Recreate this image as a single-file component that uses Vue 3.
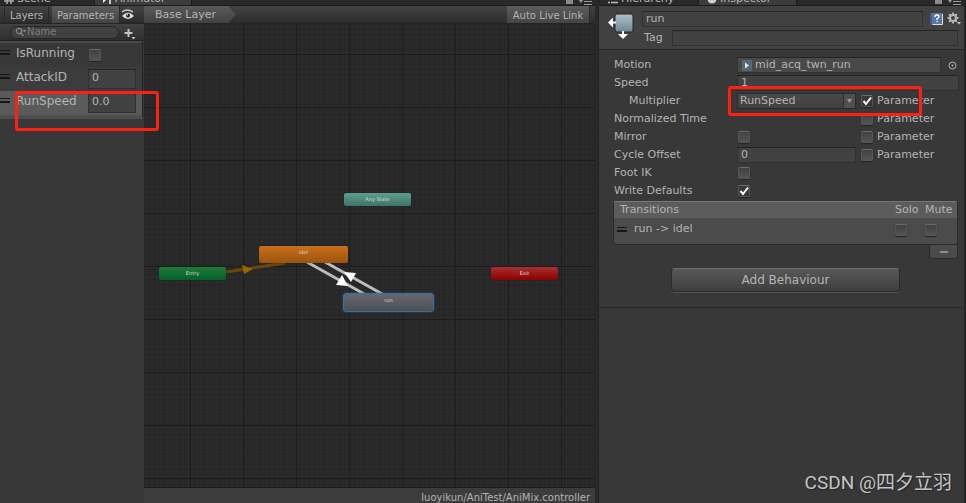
<script setup>
import { reactive, ref } from 'vue'

const search = ref('')
const isRunning = ref(false)
const attackId = ref('0')
const runSpeed = ref('0.0')

const nodes = [
  { id: 'any', label: 'Any State', x: 200, y: 169, w: 67 },
  { id: 'idel', label: 'idel', x: 115, y: 222, w: 89 },
  { id: 'entry', label: 'Entry', x: 15, y: 243, w: 67 },
  { id: 'exit', label: 'Exit', x: 347, y: 243, w: 67 },
  { id: 'run', label: 'run', x: 199, y: 269, w: 91 }
]

const state = reactive({
  name: 'run',
  tag: '',
  motion: 'mid_acq_twn_run',
  speed: '1',
  multiplier: 'RunSpeed',
  multiplierParam: true,
  timeParam: false,
  mirror: false,
  mirrorParam: false,
  cycleOffset: '0',
  cycleParam: false,
  footIk: false,
  writeDefaults: true,
  solo: false,
  mute: false
})
</script>

<template>
  <main class="editor">
    <section class="animator">
      <nav class="tabs">
        <a href="#scene" class="tab tab-scene">
          <svg class="tab-icon" viewBox="0 0 10 10"><path d="M3 0v10M7 0v10M0 3h10M0 7h10" stroke="#aaa" stroke-width="1.5" /></svg>Scene
        </a>
        <a href="#animator" class="tab tab-animator active">
          <svg class="tab-icon" viewBox="0 0 10 10"><path d="M1 0v9l3-3h3z" fill="#eee" /><path d="M8 5v5" stroke="#ccc" stroke-width="2" /></svg>Animator
        </a>
        <span class="window-tools"><i class="lock"></i><svg width="13" height="5" viewBox="0 0 13 5"><path d="M0 0h4L2 3zM5 1h8v1H5zM5 4h8v1H5z" fill="#9c9c9c" /></svg></span>
      </nav>

      <div class="animator-body">
        <aside class="params">
          <div class="bar">
            <button class="bar-btn layers">Layers</button>
            <button class="bar-btn parameters on">Parameters</button>
            <button class="eye" aria-label="Toggle panel">
              <svg width="14" height="12" viewBox="0 0 14 12">
                <path d="M1 3Q6 -1 12 3" fill="none" stroke="#ccc" stroke-width="1.3" />
                <path d="M1 7Q7 0 13 7Q7 13 1 7z" fill="#ddd" />
                <circle cx="7" cy="6.500" r="2" fill="#222" /><circle cx="6.300" cy="5.800" r=".8" fill="#eee" />
              </svg>
            </button>
          </div>
          <div class="search-row">
            <label class="search">
              <svg width="12" height="10" viewBox="0 0 12 10">
                <circle cx="4" cy="4" r="2.600" fill="none" stroke="#888" stroke-width="1.200" /><path d="M6 6l2.500 3" stroke="#888" stroke-width="1.300" /><path d="M7.500 3h4l-2 2.500z" fill="#888" />
              </svg>
              <input v-model="search" placeholder="Name" aria-label="Search parameters">
            </label>
            <button class="add" aria-label="Add parameter">
              <svg width="12" height="12" viewBox="0 0 12 12"><path d="M4.500 1v8M0.500 5h8" stroke="#c4c4c4" stroke-width="2" /><path d="M7.500 9h4l-2 2.500z" fill="#c4c4c4" /></svg>
            </button>
          </div>
          <div class="param-list">
            <div class="param">
              <i class="grip"></i><label for="p-running">IsRunning</label>
              <input id="p-running" v-model="isRunning" type="checkbox" class="check">
            </div>
            <div class="param alt">
              <i class="grip"></i><label for="p-attack">AttackID</label>
              <input id="p-attack" v-model="attackId" class="field">
            </div>
            <div class="param selected">
              <i class="grip"></i><label for="p-speed">RunSpeed</label>
              <input id="p-speed" v-model="runSpeed" class="field">
            </div>
          </div>
          <div class="mark mark-param"></div>
        </aside>

        <div class="graph">
          <div class="bar graph-bar">
            <a href="#base" class="crumb">Base Layer</a>
            <button class="bar-btn on live">Auto Live Link</button>
          </div>
          <div class="canvas">
            <svg class="edges" width="452" height="464" viewBox="0 0 452 464">
              <path d="M82 248L141 239" stroke="#694803" stroke-width="3" />
              <path d="M98 241l11 4-9 5z" fill="#9a6500" />
              <path d="M163 238L222 271M181 238L240 271" stroke="#bcbcbc" stroke-width="3" />
              <path d="M198 251l-6 10 12 1zM200 248l12 1-5 9z" fill="#fff" />
            </svg>
            <div
              v-for="n in nodes" :key="n.id" class="node" :class="n.id"
              :style="{ left: n.x + 'px', top: n.y + 'px', width: n.w + 'px' }"
            >{{ n.label }}</div>
          </div>
          <footer class="path">luoyikun/AniTest/AniMix.controller</footer>
        </div>
      </div>
    </section>

    <section class="inspector">
      <nav class="tabs">
        <a href="#hierarchy" class="tab tab-hierarchy">
          <svg class="tab-icon" viewBox="0 0 10 10"><path d="M0 5h2M3 5h7M0 8.500h2M3 8.500h7" stroke="#bbb" stroke-width="1.500" /></svg>Hierarchy
        </a>
        <a href="#inspector" class="tab tab-inspector active">
          <svg class="tab-icon" viewBox="0 0 10 10"><circle cx="5" cy="5" r="4.500" fill="#ccc" /></svg>Inspector
        </a>
        <span class="window-tools"><i class="lock"></i><svg width="13" height="5" viewBox="0 0 13 5"><path d="M0 0h4L2 3zM5 1h8v1H5zM5 4h8v1H5z" fill="#9c9c9c" /></svg></span>
      </nav>

      <header class="head">
        <svg class="state-icon" width="28" height="28" viewBox="0 0 28 28">
          <defs><linearGradient id="tile" x2="0" y2="1"><stop offset="0" stop-color="#abc0c9" /><stop offset=".5" stop-color="#8fa6b0" /><stop offset="1" stop-color="#6f8791" /></linearGradient></defs>
          <rect x="7" y="2" width="18" height="18" rx="2" fill="url(#tile)" stroke="#262626" />
          <path d="M0 10.500l5-5v4h3v2H5v4zM15 27l-5-5h4v-3h2v3h4z" fill="#fff" />
        </svg>
        <div class="head-fields">
          <div class="head-row">
            <input v-model="state.name" class="field grow" aria-label="State name">
            <button class="tool" aria-label="Help">
              <svg width="14" height="14" viewBox="0 0 14 14"><path d="M1 1h3v12H1z" fill="#3c5f91" /><path d="M3 1h10v11H3z" fill="#5878a2" /><path d="M3.500 12.500h10V2" fill="none" stroke="#ddd" /><path d="M6 5q0-2 2-2t2 1.700q0 1-2 2V8" fill="none" stroke="#fff" stroke-width="1.300" /><path d="M7.400 9h1.300v1.300H7.400z" fill="#fff" /></svg>
            </button>
            <button class="tool" aria-label="Settings">
              <svg width="14" height="14" viewBox="0 0 14 14"><circle cx="6" cy="6" r="3" fill="none" stroke="#b8b8b8" stroke-width="2" /><path d="M6 .5v2M6 9.500v2M.5 6h2M9.500 6h2M2.100 2.100l1.400 1.400M8.500 8.500l1.400 1.400M9.900 2.100L8.500 3.500M2.100 9.900l1.400-1.400" stroke="#b8b8b8" stroke-width="1.800" /><path d="M10 10h4l-2 2.500z" fill="#c8c8c8" /></svg>
            </button>
          </div>
          <div class="head-row">
            <label class="tag" for="s-tag">Tag</label>
            <input id="s-tag" v-model="state.tag" class="field grow">
          </div>
        </div>
      </header>

      <div class="rows">
        <div class="row">
          <label for="s-motion">Motion</label>
          <div class="wide">
            <span class="object grow">
              <svg width="10" height="11" viewBox="0 0 10 11"><path d="M0 0h10v11H0z" fill="#526872" /><path d="M3 2.500l4 3-4 3z" fill="#e1e7e9" /></svg>
              <input id="s-motion" v-model="state.motion" class="field grow">
            </span>
            <button class="pick" aria-label="Pick motion"><svg width="9" height="9" viewBox="0 0 9 9"><circle cx="4.500" cy="4.500" r="3.500" fill="none" stroke="#b4b4b4" /><circle cx="4.500" cy="4.500" r="1" fill="#b4b4b4" /></svg></button>
          </div>
        </div>
        <div class="row">
          <label for="s-speed">Speed</label>
          <div class="wide"><input id="s-speed" v-model="state.speed" class="field grow"></div>
        </div>
        <div class="row">
          <label class="indent" for="s-mult">Multiplier</label>
          <select id="s-mult" v-model="state.multiplier" class="select"><option>RunSpeed</option></select>
          <label class="param-check"><input v-model="state.multiplierParam" type="checkbox" class="check">Parameter</label>
        </div>
        <div class="row">
          <span>Normalized Time</span><span></span>
          <label class="param-check"><input v-model="state.timeParam" type="checkbox" class="check">Parameter</label>
        </div>
        <div class="row">
          <label for="s-mirror">Mirror</label>
          <input id="s-mirror" v-model="state.mirror" type="checkbox" class="check own">
          <label class="param-check"><input v-model="state.mirrorParam" type="checkbox" class="check">Parameter</label>
        </div>
        <div class="row">
          <label for="s-cycle">Cycle Offset</label>
          <input id="s-cycle" v-model="state.cycleOffset" class="field">
          <label class="param-check"><input v-model="state.cycleParam" type="checkbox" class="check">Parameter</label>
        </div>
        <div class="row">
          <label for="s-ik">Foot IK</label>
          <input id="s-ik" v-model="state.footIk" type="checkbox" class="check own">
        </div>
        <div class="row">
          <label for="s-wd">Write Defaults</label>
          <input id="s-wd" v-model="state.writeDefaults" type="checkbox" class="check own">
        </div>
      </div>

      <div class="transitions">
        <table>
          <thead><tr><th class="name">Transitions</th><th class="flag">Solo</th><th class="flag">Mute</th></tr></thead>
          <tbody>
            <tr>
              <td><span class="trans"><i class="grip"></i>run -&gt; idel</span></td>
              <td><input v-model="state.solo" type="checkbox" class="check" aria-label="Solo"></td>
              <td><input v-model="state.mute" type="checkbox" class="check" aria-label="Mute"></td>
            </tr>
          </tbody>
        </table>
        <button class="minus" aria-label="Remove transition"><i></i></button>
      </div>
      <div class="behaviour"><button>Add Behaviour</button></div>
      <div class="mark mark-mult"></div>
    </section>
    <div class="watermark">CSDN @四夕立羽</div>
  </main>
</template>

<style>
body { background: #383838; }
</style>

<style scoped>
* { box-sizing: border-box; }
.editor {
  display: grid;
  grid-template-columns: minmax(0, 598fr) minmax(0, 368fr);
  min-height: 100vh;
  position: relative;
  overflow: hidden;
  background: #383838;
  color: #b4b4b4;
  font: 11px/16px "DejaVu Sans", "Noto Sans CJK SC", sans-serif;
}
button, input, select { font: inherit; color: inherit; margin: 0; padding: 0; border: 0; background: none; min-width: 0; }
a { color: inherit; text-decoration: none; }
svg { display: block; flex: none; }

.animator { display: flex; flex-direction: column; border-right: 3px solid #292929; }
.inspector { display: flex; flex-direction: column; position: relative; border-left: 1px solid #222; border-right: 2px solid #242424; }

.tabs { display: flex; align-items: flex-end; height: 6px; overflow: hidden; background: #292929; border-bottom: 1px solid #1c1c1c; flex: none; }
.tab { display: flex; align-items: center; gap: 3px; height: 12px; }
.tab.active { background: #3c3c3c; border-left: 1px solid #1c1c1c; border-right: 1px solid #1c1c1c; }
.tab-icon { width: 10px; height: 10px; }
.tab-scene { width: 94px; padding-left: 4px; }
.tab-animator { width: 98px; padding-left: 7px; }
.tab-hierarchy { width: 99px; padding-left: 9px; }
.tab-inspector { width: 99px; padding-left: 8px; }
.window-tools { display: flex; gap: 6px; margin-left: auto; padding-right: 3px; height: 5px; }
.lock { width: 7px; height: 4px; background: #8a8a8a; }

.animator-body { flex: 1; display: grid; grid-template-columns: 144px minmax(0, 1fr); }
.params { position: relative; background: #383838; }
.bar { display: flex; height: 18px; background: linear-gradient(#434343, #2c2c2c); border-bottom: 1px solid #242424; }
.bar-btn { height: 17px; line-height: 19px; font-size: 10px; text-align: center; white-space: nowrap; border-right: 1px solid #292929; }
.bar-btn.on { background: linear-gradient(#5c5c5c, #444); }
.layers { width: 45px; margin-left: 4px; border-left: 1px solid #292929; }
.parameters { width: 68px; margin-left: 3px; }
.eye { display: grid; place-items: center; width: 15px; }
.search-row { display: flex; align-items: center; height: 17px; padding-left: 10px; gap: 5px; background: linear-gradient(#424242, #2e2e2e); border-bottom: 1px solid #222; }
.search { display: flex; align-items: center; width: 109px; height: 13px; padding-left: 4px; border: 1px solid #252525; border-radius: 7px; background: #414141; }
.search input { width: 80px; height: 11px; font-size: 10px; outline: none; }
.search input::placeholder { color: #7d7d7d; opacity: 1; }
.add { padding-top: 4px; }
.param-list { width: 143px; border-top: 2px solid #4a4a4a; border-bottom: 4px solid #4e4e4e; border-right: 1px solid #252525; }
.param { display: grid; grid-template-columns: 9px 72px 55px; height: 24px; align-items: center; }
.param label { padding-left: 7px; padding-bottom: 4px; font-size: 12px; line-height: 16px; white-space: nowrap; }
.param .grip { align-self: start; margin-top: 7px; }
.param .check { margin-left: 8px; }
.param .field { margin-left: 7px; width: 48px; height: 20px; padding-bottom: 4px; }
.param.alt { background: #3c3c3c; }
.param.selected { background: #5a5a5a; }
.grip { display: block; width: 10px; height: 5px; border-top: 1px solid #171717; border-bottom: 2px solid #171717; }

.graph { display: flex; flex-direction: column; }
.graph-bar { justify-content: space-between; padding-right: 5px; }
.crumb { width: 92px; height: 17px; padding-left: 11px; font-size: 11px; line-height: 18px; white-space: nowrap; background: linear-gradient(#595959, #424242); clip-path: polygon(0 0, 84px 0, 100% 50%, 84px 100%, 0 100%); }
.live { width: 83px; }
.canvas {
  flex: 1;
  position: relative;
  overflow: hidden;
  background-color: #2a2a2a;
  background-image:
    linear-gradient(90deg, #1d1d1d 1px, transparent 1px),
    linear-gradient(#1d1d1d 1px, transparent 1px),
    repeating-linear-gradient(90deg, #262626 0 1px, transparent 1px 5px),
    repeating-linear-gradient(#262626 0 1px, transparent 1px 5px);
  background-size: 53px 53px, 53px 53px, auto, auto;
  background-position: 46px 30px, 46px 30px, 0 0, 0 0;
}
.edges { position: absolute; left: 0; top: 0; }
.node { position: absolute; height: 13px; border-radius: 2px; color: #dcdcdc; font-size: 5px; line-height: 12px; text-align: center; box-shadow: 0 0 1px #111; }
.any { background: linear-gradient(#5c9f8c, #3f7368); }
.idel { height: 17px; background: linear-gradient(#cb701b, #9b540e); }
.entry { background: linear-gradient(#207b38, #04602a); }
.exit { background: linear-gradient(#a53030, #8e0000); }
.run { height: 19px; background: linear-gradient(#64686e, #4c5054); border: 1px solid #386fa0; border-radius: 3px; box-shadow: 0 0 2px #2d5f8c; }
.path { height: 16px; padding: 2px 5px 0 0; overflow: hidden; text-align: right; font-size: 10px; line-height: 16px; background: #3c3c3c; border-top: 1px solid #1e1e1e; }

.head { display: flex; padding: 5px 6px 0 9px; height: 44px; background: #414141; border-bottom: 1px solid #272727; }
.state-icon { margin-top: 1px; }
.head-fields { flex: 1; padding-left: 6px; min-width: 0; }
.head-row { display: flex; align-items: center; height: 16px; margin-bottom: 3px; }
.grow { flex: 1; }
.field { height: 16px; padding: 0 3px; background: #414141; border: 1px solid #303030; border-top-color: #242424; outline: none; }
.head-row .tool { margin-left: 6px; }
.head-row .tool + .tool { margin-left: 4px; margin-right: -3px; }
.tag { width: 30px; padding-left: 2px; }

.rows { padding: 6px 5px 0 15px; }
.row { display: grid; grid-template-columns: 123px 119px minmax(0, 1fr); height: 18px; align-items: center; white-space: nowrap; }
.wide { grid-column: 2 / 4; display: flex; align-items: center; }
.object { display: flex; align-items: center; min-width: 0; padding-left: 4px; border: 1px solid #303030; border-top-color: #242424; background: #494949; }
.object .field { height: 14px; border: 0; background: none; }
.pick { width: 18px; display: flex; justify-content: center; padding-left: 5px; }
.indent { padding-left: 15px; }
.select { appearance: none; width: 119px; height: 16px; line-height: 14px; padding-left: 2px; border: 1px solid #2a2a2a; background: conic-gradient(from -45deg at 50% 100%, #909090 90deg, transparent 0), linear-gradient(90deg, #303030 1px, #575757 1px), linear-gradient(#4a4a4a, #404040); background: url("data:image/svg+xml,%3Csvg xmlns='http://www.w3.org/2000/svg' viewBox='0 0 5 4'%3E%3Cpath d='M0 0h5L2.500 4z' fill='%23999'/%3E%3C/svg%3E"), linear-gradient(90deg, #303030 1px, #505050 1px), linear-gradient(#4a4a4a, #404040); background-size: 5px 4px, 12px 100%, 100% 100%; background-position: right 3px center, right, 0 0; background-repeat: no-repeat; }
.param-check { display: flex; align-items: center; gap: 4px; padding-left: 5px; }
.check { appearance: none; display: block; width: 12px; height: 12px; border: 1px solid #626262; border-color: #6c6c6c #565656 #565656; border-radius: 2px; background: linear-gradient(#414141, #545454); box-shadow: 0 1px 1px #222; flex: none; }
.check.own { margin-left: 1px; }
.check:checked { background-image: url("data:image/svg+xml,%3Csvg xmlns='http://www.w3.org/2000/svg' viewBox='0 0 10 10'%3E%3Cpath d='M1.500 5l2.500 3L9 1.500' fill='none' stroke='white' stroke-width='2'/%3E%3C/svg%3E"); }
.row .field:not(.grow) { width: 119px; }

.transitions { margin: 1px 6px 0 14px; display: flex; flex-direction: column; align-items: flex-end; }
table { width: 100%; border-collapse: separate; border-spacing: 0; table-layout: fixed; border: 1px solid #2b2b2b; border-top-color: #777; border-radius: 3px; background: #4b4b4b; }
th { height: 16px; padding: 0; font-weight: normal; text-align: left; line-height: 14px; background: #5c5c5c; white-space: nowrap; }
th.name { padding-left: 6px; }
th.flag { width: 30px; }
th.flag:last-child { width: 32px; }
td { height: 26px; padding: 0 0 2px; vertical-align: middle; }
.trans { display: flex; align-items: center; gap: 7px; padding-left: 3px; padding-bottom: 2px; }
.minus { width: 29px; height: 14px; display: grid; place-items: center; background: #4b4b4b; border: 1px solid #2b2b2b; border-top: 0; border-radius: 0 0 3px 3px; }
.minus i { width: 8px; height: 2px; background: #8c8c8c; }
.behaviour { padding: 9px 64px 15px 72px; border-bottom: 1px solid #2b2b2b; }
.behaviour button { display: block; width: 100%; height: 24px; font-size: 12px; line-height: 20px; border: 1px solid #2a2a2a; border-top-color: #6c6c6c; border-radius: 4px; background: linear-gradient(#585858, #3e3e3e); box-shadow: 0 1px 0 #555; }

.mark { position: absolute; border: 3px solid #ff2014; border-radius: 3px; pointer-events: none; }
.mark-param { left: 15px; top: 85px; width: 144px; height: 40px; z-index: 2; }
.mark-mult { left: 129px; top: 86px; width: 194px; height: 30px; }
.watermark { position: absolute; right: 14px; bottom: 6px; font: 19px/28px Roboto, "Noto Sans CJK SC", sans-serif; color: #c4c4c4; text-shadow: 1px 1px 1px #222; white-space: nowrap; }
</style>
